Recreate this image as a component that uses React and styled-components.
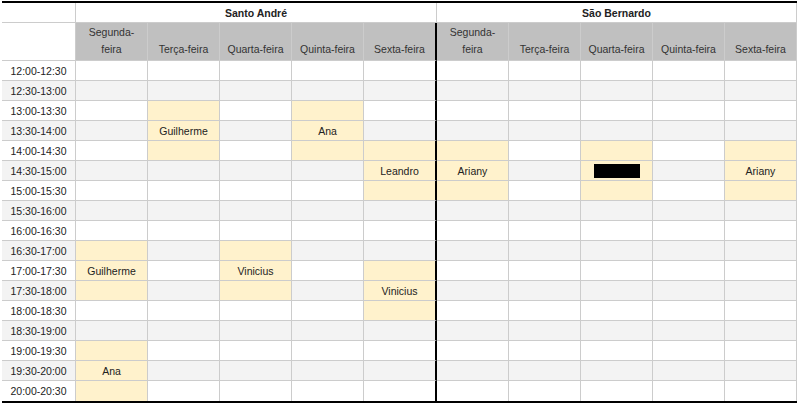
import styled, { createGlobalStyle } from "styled-components";

const GlobalStyle = createGlobalStyle`
  html, body {
    margin: 0;
    padding: 0;
    background: #fff;
    font-family: "Liberation Sans", Arial, sans-serif;
  }
`;

const Sheet = styled.div`
  display: grid;
  grid-template-columns: 74px repeat(4, 72px) 73px repeat(5, 72px);
  grid-template-rows: 20px 38px;
  grid-auto-rows: 20px;
  width: 795px;
  margin: 1px 0 0 2px;
  border-top: 2px solid #000;
  border-bottom: 2px solid #000;
  font-size: 10.5px;
  color: #222;
`;

const Cell = styled.div`
  box-sizing: border-box;
  display: flex;
  align-items: center;
  justify-content: center;
  text-align: center;
  padding: 0 4px;
  overflow: hidden;
  white-space: nowrap;
  background: ${(p) => p.$bg || "#fff"};
  border-right: ${(p) => (p.$divider ? "2px solid #000" : "1px solid #ccc")};
  border-bottom: ${(p) => (p.$last ? "none" : "1px solid #ccc")};
  grid-column: ${(p) => (p.$span ? `span ${p.$span}` : "auto")};
`;

const Title = styled(Cell)`
  font-weight: bold;
  color: #222;
  padding-top: 1px;
`;

const DayHead = styled(Cell)`
  background: #c0c0c0;
  color: #333;
  align-items: flex-end;
  white-space: normal;
  line-height: 17px;
  padding-bottom: 2px;
`;

const Redacted = styled.span`
  display: inline-block;
  width: 46px;
  height: 14px;
  background: #000;
`;

const slots = [
  "12:00-12:30", "12:30-13:00", "13:00-13:30", "13:30-14:00", "14:00-14:30",
  "14:30-15:00", "15:00-15:30", "15:30-16:00", "16:00-16:30", "16:30-17:00",
  "17:00-17:30", "17:30-18:00", "18:00-18:30", "18:30-19:00", "19:00-19:30",
  "19:30-20:00", "20:00-20:30",
];

const days = ["Segunda-feira", "Terça-feira", "Quarta-feira", "Quinta-feira", "Sexta-feira"];

// each booking covers three half-hour slots, name shown in the middle one
const bookings = [
  { col: 0, start: 9, name: "Guilherme" },
  { col: 0, start: 14, name: "Ana" },
  { col: 1, start: 2, name: "Guilherme" },
  { col: 2, start: 9, name: "Vinicius" },
  { col: 3, start: 2, name: "Ana" },
  { col: 4, start: 4, name: "Leandro" },
  { col: 4, start: 10, name: "Vinicius" },
  { col: 5, start: 4, name: "Ariany" },
  { col: 7, start: 4, redacted: true },
  { col: 9, start: 4, name: "Ariany" },
];

const findBooking = (col, row) =>
  bookings.find((b) => b.col === col && row >= b.start && row < b.start + 3);

const App = () => {
  const last = slots.length - 1;
  return (
    <>
      <GlobalStyle />
      <Sheet>
        <Title />
        <Title $span={5}>Santo André</Title>
        <Title $span={5}>São Bernardo</Title>

        <Cell />
        {[...days, ...days].map((d, i) => (
          <DayHead key={i} $divider={i === 4}>
            {d}
          </DayHead>
        ))}

        {slots.map((slot, row) => {
          const rowBg = row % 2 ? "#f3f3f3" : "#fff";
          return [
            <Cell key={`t${row}`} $bg={rowBg} $last={row === last}>
              {slot}
            </Cell>,
            ...Array.from({ length: 10 }, (_, col) => {
              const b = findBooking(col, row);
              const middle = b && row === b.start + 1;
              return (
                <Cell
                  key={`${row}-${col}`}
                  $bg={b ? "#fff2cc" : rowBg}
                  $divider={col === 4}
                  $last={row === last}
                >
                  {middle && (b.redacted ? <Redacted /> : b.name)}
                </Cell>
              );
            }),
          ];
        })}
      </Sheet>
    </>
  );
};

export default App;
